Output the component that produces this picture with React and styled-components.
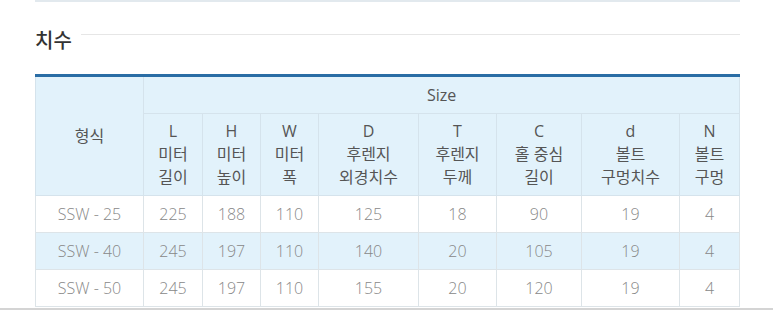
import React from 'react';
import styled, { createGlobalStyle } from 'styled-components';

const GlobalStyle = createGlobalStyle`
  body {
    margin: 0;
    background: #fff;
    font-family: 'Open Sans', 'Noto Sans CJK KR', sans-serif;
  }
`;

const Page = styled.div`
  width: 773px;
  height: 312px;
  overflow: hidden;
  position: relative;
`;

const Section = styled.div`
  padding: 0 33px 0 35px;
`;

const TopBar = styled.div`
  height: 2px;
  background: #e2e9ee;
`;

const TitleRow = styled.div`
  display: flex;
  align-items: center;
  gap: 9px;
  height: 40px;
  margin-top: 16px;
  margin-bottom: 16px;
`;

const Title = styled.h3`
  margin: 0;
  font-family: 'Noto Sans CJK KR', sans-serif;
  font-size: 20px;
  font-weight: 500;
  color: #333;
  position: relative;
  top: 1px;
`;

const TitleLine = styled.div`
  flex: 1;
  height: 1px;
  background: #e6e6e6;
  margin-top: -8px;
`;

const Table = styled.table`
  width: 704px;
  table-layout: fixed;
  border-collapse: collapse;
  border-top: 3px solid #2a6da5;
  text-align: center;
`;

const Th = styled.th`
  background: #e2f2fb;
  border: 1px solid #d5e3ec;
  border-top: none;
  color: #555;
  font-size: 16px;
  font-weight: 400;
  line-height: 23px;
  height: ${p => p.$h}px;
  padding: 0;
  font-family: 'Open Sans', 'Noto Sans CJK KR', sans-serif;
`;

const Tr = styled.tr`
  background: ${p => (p.$alt ? '#e2f2fb' : '#fff')};
`;

const Td = styled.td`
  border: 1px solid #dde4e8;
  color: #888;
  height: 36px;
  padding: 0;
  font-size: 16px;
  font-weight: 300;
`;

const BottomLine = styled.div`
  position: absolute;
  left: 0;
  right: 0;
  top: 308px;
  height: 2px;
  background: #d4d4d4;
`;

const widths = [108, 59, 58, 58, 100, 78, 85, 98, 60];

const sizeCols = [
  ['L', '미터', '길이'],
  ['H', '미터', '높이'],
  ['W', '미터', '폭'],
  ['D', '후렌지', '외경치수'],
  ['T', '후렌지', '두께'],
  ['C', '홀 중심', '길이'],
  ['d', '볼트', '구멍치수'],
  ['N', '볼트', '구멍'],
];

const rows = [
  ['SSW - 25', 225, 188, 110, 125, 18, 90, 19, 4],
  ['SSW - 40', 245, 197, 110, 140, 20, 105, 19, 4],
  ['SSW - 50', 245, 197, 110, 155, 20, 120, 19, 4],
];

const App = () => {
  return (
    <Page>
      <GlobalStyle />
      <Section>
        <TopBar />
        <TitleRow>
          <Title>치수</Title>
          <TitleLine />
        </TitleRow>
        <Table>
          <colgroup>
            {widths.map((w, i) => (
              <col key={i} style={{ width: w }} />
            ))}
          </colgroup>
          <thead>
            <tr>
              <Th rowSpan={2} $h={36}>형식</Th>
              <Th colSpan={8} $h={36}>Size</Th>
            </tr>
            <tr>
              {sizeCols.map((c, i) => (
                <Th key={i} $h={81}>
                  {c[0]}
                  <br />
                  {c[1]}
                  <br />
                  {c[2]}
                </Th>
              ))}
            </tr>
          </thead>
          <tbody>
            {rows.map((r, i) => (
              <Tr key={i} $alt={i === 1}>
                {r.map((v, j) => (
                  <Td key={j}>{v}</Td>
                ))}
              </Tr>
            ))}
          </tbody>
        </Table>
      </Section>
      <BottomLine />
    </Page>
  );
};

export default App;
